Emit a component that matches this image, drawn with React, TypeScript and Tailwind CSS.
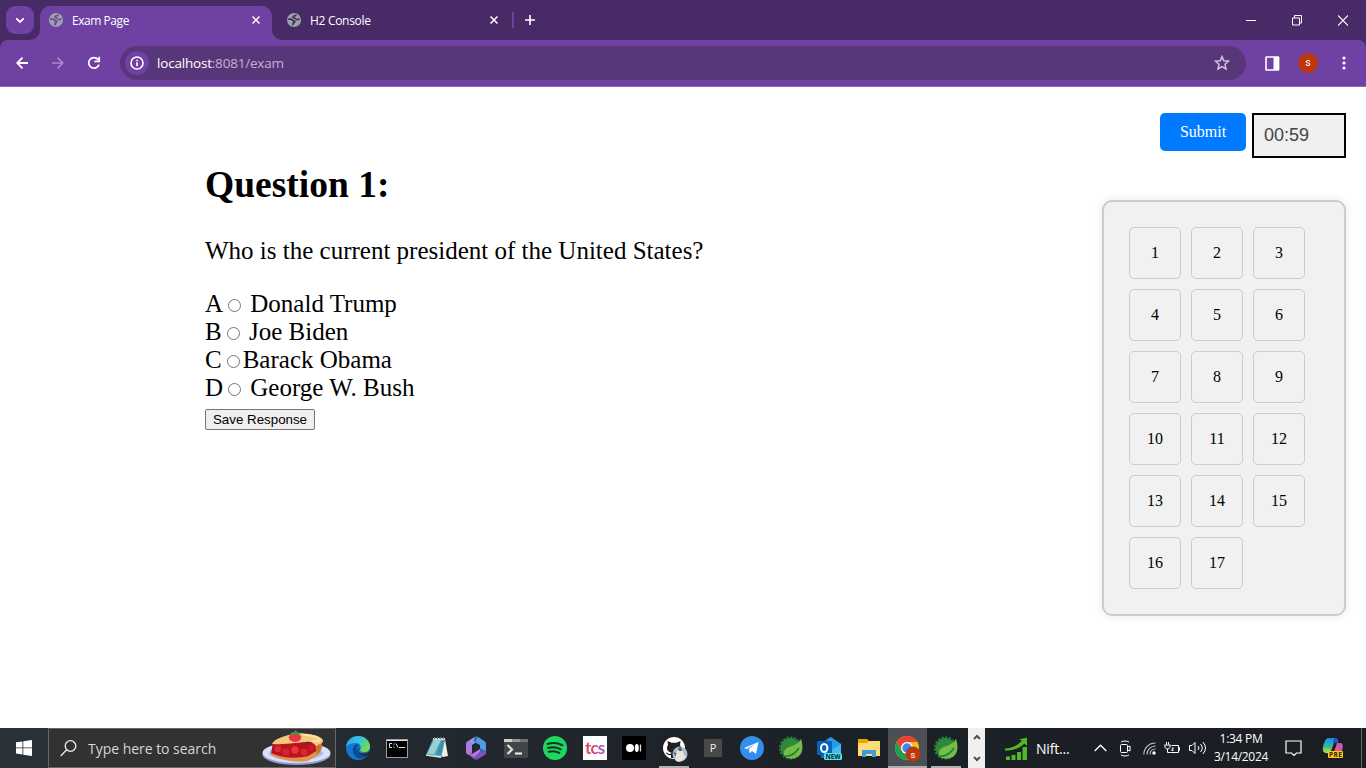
import React from "react";

const ui = "font-['Open_Sans','Noto_Sans',sans-serif]";

function Globe({ ink }: { ink: string }) {
  return (
    <svg width="14" height="14" viewBox="0 0 14 14" className="shrink-0">
      <circle cx="7" cy="7" r="7" fill="#9ba3a7" />
      <path
        d="M1.2 6.2H3.6C5.2 6.2 5.6 7.6 7 7.8 8.2 8 8 9.6 6.6 9.7 5.8 9.8 5.900 10.800 5.800 12.400"
        fill="none"
        stroke={ink}
        strokeWidth="1.7"
      />
      <path
        d="M9 1.6C9 2.800 8.200 3.100 7 3.100 5.400 3.200 5.600 4.900 7.200 4.900 9 4.900 8.600 6.700 10 6.700 11.200 6.700 11.200 5.800 12.600 5.800"
        fill="none"
        stroke={ink}
        strokeWidth="1.5"
      />
    </svg>
  );
}

function Cross() {
  return (
    <svg width="8" height="8" viewBox="0 0 8 8" className="shrink-0" stroke="#fff" strokeWidth="1.5">
      <path d="M.5.5l7 7M7.5.5l-7 7" />
    </svg>
  );
}

function TabStrip() {
  return (
    <div className={`flex h-10 shrink-0 bg-[#472a66] text-[12px] text-white ${ui}`}>
      <div className="mt-1.5 ml-1.5 flex h-7 w-7 items-center justify-center rounded-[9px] bg-[#6f41a2]">
        <svg width="10" height="7" viewBox="0 0 10 7" fill="none" stroke="#fff" strokeWidth="1.8">
          <path d="M1.2 1.3L5 5l3.8-3.7" />
        </svg>
      </div>
      <svg className="mt-[30px] ml-[-4px] shrink-0" width="10" height="10">
        <path d="M10 0v10H0A10 10 0 0 0 10 0" fill="#6f41a2" />
      </svg>
      <div className="mt-1.5 flex h-[34px] w-[232px] items-center rounded-t-[10px] bg-[#6f41a2] pr-3 pb-[6px] pl-[9px]">
        <Globe ink="#6f41a2" />
        <span className="ml-[9px] flex-1 pt-[2px] tracking-[-0.45px]">Exam Page</span>
        <Cross />
      </div>
      <svg className="mt-[30px] shrink-0" width="10" height="10">
        <path d="M0 0v10h10A10 10 0 0 1 0 0" fill="#6f41a2" />
      </svg>
      <div className="mt-1.5 flex h-7 w-[216px] items-center pl-[5px]">
        <Globe ink="#472a66" />
        <span className="ml-[9px] flex-1 pt-[2px] tracking-[-0.3px]">H2 Console</span>
        <Cross />
      </div>
      <div className="mt-3 ml-[14px] h-4 w-[2px] bg-[#6f41a2]" />
      <svg className="mt-[15px] ml-[11px]" width="10" height="10" stroke="#fff" strokeWidth="1.6">
        <path d="M5 0v10M0 5h10" />
      </svg>
      <div className="mr-[18px] ml-auto flex h-10 items-center gap-9">
        <svg width="10" height="11" stroke="#fff">
          <path d="M0 5.5h10" />
        </svg>
        <svg width="10" height="11" stroke="#fff" fill="none">
          <path d="M.5 3h7v7h-7zM2.5 3V.5h7V8H7.5" />
        </svg>
        <svg width="10" height="11" stroke="#fff" strokeWidth="1.1">
          <path d="M0 .5l10 10M10 .5l-10 10" />
        </svg>
      </div>
    </div>
  );
}

function Toolbar() {
  return (
    <div className="h-[47px] shrink-0 bg-[#472a66]">
      <div className={`flex h-[47px] items-center rounded-t-[8px] border-b border-[#8f69b8] bg-[#6f41a2] text-white ${ui}`}>
        <svg className="ml-4" width="12" height="12" fill="none" stroke="#fff" strokeWidth="1.8">
          <path d="M12 6H1.5M6.5.6L1.2 6l5.3 5.4" />
        </svg>
        <svg className="ml-6" width="12" height="12" fill="none" stroke="#a88bc8" strokeWidth="1.6">
          <path d="M0 6h10.5M5.5.6L10.8 6l-5.3 5.4" />
        </svg>
        <svg className="ml-[23px]" width="14" height="14" fill="none" stroke="#fff" strokeWidth="1.8">
          <path d="M12 8.6A5.3 5.3 0 1 1 11 3.4M12.2.8v4.6H7.4" />
        </svg>
        <div className="ml-[19px] flex h-[34px] w-[1126px] items-center rounded-full bg-[#57377a] pr-4 pl-[5px]">
          <div className="flex h-6 w-6 items-center justify-center rounded-full bg-[#6f41a2]">
            <svg width="14" height="14" fill="none" stroke="#fff" strokeWidth="1.6">
              <circle cx="7" cy="7" r="6" />
              <path d="M7 6.2v4M7 3.7v1.5" />
            </svg>
          </div>
          <div className="ml-2 flex-1 text-[13.5px] tracking-[-0.2px]">
            localhost<span className="text-[#c0b0d0]">:8081/exam</span>
          </div>
          <svg width="16" height="16" viewBox="0 0 16 16" fill="none" stroke="#d0c8d8" strokeWidth="1.5">
            <path d="M8 1.6l1.8 4.2 4.7.4-3.5 3.1 1 4.6L8 11.5l-4 2.4 1-4.6-3.5-3.1 4.7-.4z" />
          </svg>
        </div>
        <svg className="ml-[19px]" width="15" height="15">
          <rect x="1" y="1" width="12.600" height="13" rx=".5" fill="none" stroke="#fff" strokeWidth="1.6" />
          <path d="M8.5 1h5.300v13H8.5z" fill="#fff" />
        </svg>
        <div className="ml-[18px] flex h-5 w-5 items-center justify-center rounded-full bg-[#bf360c] font-['Roboto',sans-serif] text-[10.5px]">
          s
        </div>
        <svg className="ml-6" width="4" height="14" fill="#fff">
          <circle cx="2" cy="2" r="1.6" />
          <circle cx="2" cy="7" r="1.6" />
          <circle cx="2" cy="12" r="1.6" />
        </svg>
      </div>
    </div>
  );
}

const options: [string, string][] = [
  ["A", " Donald Trump"],
  ["B", " Joe Biden"],
  ["C", "Barack Obama"],
  ["D", " George W. Bush"],
];

function Exam() {
  return (
    <main className="flex min-h-0 flex-1 bg-white font-['Liberation_Serif',serif] text-black">
      <section className="mt-[76px] ml-[205px] flex-1 text-[25px] leading-7">
        <h2 className="text-[37.5px] leading-[43px] font-bold">Question 1:</h2>
        <p className="mt-[31px]">Who is the current president of the United States?</p>
        <div className="mt-[25px]">
          {options.map(([letter, label]) => (
            <label key={letter} className="block h-7 whitespace-pre">
              {letter}
              <input type="radio" name="answer" className="mt-[3px] mr-[3px] mb-0 ml-[5px] h-[13px] w-[13px] align-baseline" />
              {label}
            </label>
          ))}
        </div>
        <button className="mt-[7px] flex h-[21px] w-[110px] items-center justify-center rounded-[2px] border border-[#767676] bg-[#efefef] font-['Liberation_Sans',sans-serif] text-[13.333px] leading-none">
          Save Response
        </button>
      </section>
      <aside className="mt-[26px] mr-5 flex w-[244px] flex-col">
        <div className="flex justify-end gap-1.5">
          <button className="h-[38px] w-[86px] rounded-[5px] bg-[#007bff] text-[16px] text-white">Submit</button>
          <div className="flex h-[45px] w-[94px] items-center border-2 border-black bg-[#efefef] pl-[10px] font-['Liberation_Sans',sans-serif] text-[18px] text-[#444]">
            00:59
          </div>
        </div>
        <div className="mt-[42px] flex h-[416px] flex-wrap content-start gap-[10px] rounded-[10px] border-2 border-[#ccc] bg-[#f1f1f1] p-[25px] shadow-[0_0_10px_rgba(0,0,0,0.1)]">
          {Array.from({ length: 17 }, (_, i) => (
            <button key={i} className="h-[52px] w-[52px] rounded-[5px] border border-[#ccc] text-[16px]">
              {i + 1}
            </button>
          ))}
        </div>
      </aside>
    </main>
  );
}

function Pie() {
  return (
    <svg width="70" height="36" viewBox="0 0 70 36">
      <ellipse cx="34.5" cy="24.5" rx="34" ry="10.5" fill="#8f9ccf" />
      <ellipse cx="34.5" cy="22.8" rx="34" ry="10.3" fill="#dbe0fa" />
      <ellipse cx="34" cy="23" rx="27" ry="7.5" fill="#aeb8e6" />
      <path d="M11 12L54 13 54 25 46 30C33 31 20 29 9 24z" fill="#b9131f" />
      <path d="M9 23C20 28 33 29 46 26L56 20v5L46 31C33 33 19 30 9 25z" fill="#df9448" />
      <path d="M53 14L60 11V17C59 21 57 24 55 25z" fill="#c97430" />
      <path d="M10 14C12 9 22 6 34 3 45 3 58 5 61 10 62 13 57 14 54 16 52 13 48 11 44 12 37 12 25 15 10 14z" fill="#f5c77c" />
      <path d="M40 5c8 0 15 1 18 5-3 2-5 0-8 1" fill="none" stroke="#ffe0a2" strokeWidth="2.2" />
      <circle cx="16" cy="19" r="3.3" fill="#dc2b37" />
      <circle cx="24" cy="22" r="3.8" fill="#d42431" />
      <circle cx="33" cy="20" r="3.7" fill="#e5353f" />
      <circle cx="42" cy="22" r="3.5" fill="#d92633" />
      <circle cx="49" cy="18" r="3" fill="#c91c2a" />
      <path d="M27 6C28 3 36 2 39 6 40 9 37 12 34 12 30 12 26 10 27 6z" fill="#e93645" />
      <path d="M28 3l4-1 2-2 1 2 4 1-3 2-3-1-3 1z" fill="#39994a" />
    </svg>
  );
}

const Edge = () => (
  <svg width="24" height="24" viewBox="0 0 24 24">
    <defs>
      <linearGradient id="eg" x1="0" y1="0" x2="1" y2=".5">
        <stop stopColor="#26a9e8" />
        <stop offset=".55" stopColor="#35c1df" />
        <stop offset="1" stopColor="#70dd4c" />
      </linearGradient>
    </defs>
    <circle cx="12" cy="12" r="12" fill="#1478cf" />
    <path d="M0 11C1 4 6 0 12 0c7 0 12 5 12 10.5 0 3.5-2.5 5.5-5.5 5.5-4 0-5-1-4-3 1-1 .5-6-4.5-6C5.500 7 2 8 0 11" fill="url(#eg)" />
    <path d="M9 9c-3 2-3 7 0 11 4 4 9 3 13-1-4 2-9 1-11-3-1-3 0-5 2-7-2-1-3-1-4 0" fill="#0c4b92" />
    <path d="M14 11.500c-1 3-3 3.500 0 5.500 3 1 6.500.5 10-2l-1 4c-3 1.500-6 1.500-8.500 0-4-2.500-4-6-.5-7.500" fill="#262d36" />
  </svg>
);

const Cmd = () => (
  <svg width="22" height="19" viewBox="0 0 22 19">
    <path fill="#9c9da0" d="M0 0h22v19H0z" />
    <path fill="#e5e6e8" d="M1 1h20v1H1z" />
    <path fill="#020202" d="M1 2h20v16H1z" />
    <path d="M6 4.500H3.500V8.500H6M8 4.500v1.300M8 7.500v1.300M10 4.500l2 4M13 8.500h6" stroke="#ddd" fill="none" />
  </svg>
);

const Notepad = () => (
  <svg width="24" height="24" viewBox="0 0 24 24">
    <path d="M20 3l3 17-5 1-2-1z" fill="#f1eee3" />
    <path d="M8 3h12l-3.500 18L1 19z" fill="#54a9bc" />
    <path d="M9 4h7L9 18l-7 0z" fill="#9bd0d9" />
    <path d="M16 5h3l-3 14-5-.5z" fill="#3c91a8" />
    <path d="M8 2h12v2H8z" fill="#c4d2d6" />
    <path d="M9.500 1v2m3-2v2m3-2v2m3-2v2" stroke="#5e777f" />
    <path d="M1 18.500l15.500 1.800L16 22 1 19.800z" fill="#e1e2d9" />
  </svg>
);

const M365 = () => (
  <svg width="22" height="24" viewBox="0 0 22 24">
    <defs>
      <linearGradient id="m1" x1="1" x2="0" y2="1">
        <stop stopColor="#d2c6ff" />
        <stop offset=".5" stopColor="#9285ed" />
        <stop offset="1" stopColor="#d06bc9" />
      </linearGradient>
    </defs>
    <path d="M10 1L3 5C1 6 1 7 1 9v7c0 3 4 3 6 1V9l6-4V1c-1-.5-2-.5-3 0" fill="url(#m1)" />
    <path d="M10 1h3l6 4c1.500 1 2 2 2 4v6c0 2-1 3-2 4l-4-3V9L9 6c-1-2 0-4 1-5" fill="#3867b8" />
    <path d="M13 1l6 4c1.500 1 2 2 2 4v6l-6-3V9l-5-3z" fill="#4f9ce1" />
    <path d="M2 18l7 5c1.500 1 3 1 4 0l7-4c1-1 1-2 1-4l-6 1-5 3c-3 2-6 1-8-1" fill="#7652c2" />
    <path d="M2 18l5 0 8-5v3l-6 5z" fill="#bb78dc" />
  </svg>
);

const Terminal = () => (
  <svg width="24" height="19" viewBox="0 0 24 19">
    <rect width="24" height="19" rx="1" fill="#444548" />
    <path d="M0 0h8v3H0z" fill="#d0d0d0" />
    <path d="M8 0h8v3H8z" fill="#969696" />
    <path d="M16 0h8v3h-8z" fill="#737373" />
    <path d="M3.500 6l4.500 4.500L3.500 15" fill="none" stroke="#e1e1e1" strokeWidth="2.200" />
    <path d="M11 14.500h7" stroke="#f2f2f2" strokeWidth="2" />
  </svg>
);

const Spotify = () => (
  <svg width="24" height="24" viewBox="0 0 24 24">
    <circle cx="12" cy="12" r="12" fill="#1ed760" />
    <path d="M4.500 8c5-1.500 11-1 15 1.300M5 12c4.500-1.400 9-.8 12.700 1.300M5.800 15.800c4-1.100 7.500-.6 10.500 1.100" fill="none" stroke="#12351f" strokeWidth="2" strokeLinecap="round" />
  </svg>
);

const Tcs = () => (
  <div className="flex h-6 w-6 items-center justify-center bg-white">
    <span className="bg-gradient-to-r from-[#ef4136] via-[#d2408b] to-[#8260c8] bg-clip-text font-['Lato',sans-serif] text-[17px] leading-6 font-bold tracking-[-0.8px] text-transparent">
      tcs
    </span>
  </div>
);

const Medium = () => (
  <svg width="24" height="24">
    <path d="M0 0h24v24H0z" />
    <circle cx="8" cy="12" r="4" fill="#fff" />
    <ellipse cx="14.8" cy="12" rx="2" ry="4" fill="#fff" />
    <path d="M18.500 8.500v7" stroke="#ddd" strokeWidth="1.300" />
  </svg>
);

const Github = () => (
  <svg width="26" height="26" viewBox="0 0 26 26" className="mt-[2px] ml-[2px]">
    <path d="M0 0h24v24H0z" fill="#231e21" />
    <circle cx="12" cy="12" r="11" fill="#fff" />
    <path d="M9 22v-3c-3 1-4-1-5.500-2.500 2-.5 2.500 2 5 1.500l1-1.500C5 16 4 12 6 9L5.500 5l4 1.800h5L18.500 5 18 9c2 3 1 7-3.500 7.500L15 18v4z" fill="#231e21" />
    <circle cx="18" cy="18" r="7.500" fill="#a9bed0" />
    <path d="M13 24l2-9 3-2 3 2 1 4 2 2-4 4-4 1z" fill="#e7e4e4" />
    <path d="M16 12l3-1 1 4-3 0zM11.500 15.500l3 2-1.500 2.500z" fill="#655b5b" />
  </svg>
);

const PBox = () => (
  <div className="flex h-[18px] w-[18px] items-center justify-center rounded-[1px] bg-[#494949] text-[11px] text-[#eee]">P</div>
);

const Telegram = () => (
  <svg width="24" height="24">
    <circle cx="12" cy="12" r="12" fill="#348eed" />
    <path d="M4 12L18.500 6l-2.500 12-4-3-2.200 2.200-1-4.200 6-5-8 5z" fill="#fff" />
  </svg>
);

const Spring = () => (
  <svg width="24" height="24" viewBox="0 0 24 24">
    <circle cx="11.500" cy="12" r="9.800" fill="none" stroke="#237b38" strokeWidth="3.600" strokeDasharray="2.200 1.300" />
    <circle cx="11.500" cy="12" r="10" fill="#30883a" />
    <path d="M22 3c3 9 2 18-8 19.500-5 .8-10-1-9-6C6 9 17 12 22 3" fill="#75bc48" />
    <path d="M5 20c6 1 11-2 15-8" fill="none" stroke="#247b38" strokeWidth="1.500" />
  </svg>
);

const Outlook = () => (
  <svg width="25" height="23" viewBox="0 0 25 23">
    <path d="M3 7L13 0l11 7v14H4z" fill="#1767ba" />
    <path d="M10 3l4-3 10 7-9 8z" fill="#299be0" />
    <path d="M10 16l14-9v14H8z" fill="#42bcef" />
    <rect y="4" width="15" height="14" rx="1" fill="#0864b8" />
    <ellipse cx="7.200" cy="11" rx="3.200" ry="4" fill="none" stroke="#fff" strokeWidth="2" />
    <rect x="7" y="16" width="18" height="7" rx="1.500" fill="#55e4ed" />
    <text x="8.500" y="22" fontFamily="Open Sans" fontSize="6.500" fontWeight="bold" textLength="15" fill="#09282d">
      NEW
    </text>
  </svg>
);

const Folder = () => (
  <svg width="22" height="18" viewBox="0 0 22 18">
    <path d="M0 0h9l2 2h11v15H0z" fill="#e9a900" />
    <path d="M0 4l9 0 2-2h11v15H0z" fill="#ffdc76" />
    <path d="M4 18v-7h14v7h-4v-3H8v3z" fill="#3d9de1" />
  </svg>
);

const Chrome = () => (
  <svg width="26" height="27" viewBox="0 0 26 27" className="mt-[2px] ml-[2px]">
    <circle cx="12" cy="12" r="12" fill="#fbc116" />
    <path d="M1.600 6A12 12 0 0 1 22.400 6H12l-5 9z" fill="#ea4335" />
    <path d="M1.600 6A12 12 0 0 0 12 24l5-9H7z" fill="#259e4b" />
    <circle cx="12" cy="12" r="6" fill="#fff" />
    <circle cx="12" cy="12" r="4.700" fill="#4285f4" />
    <circle cx="18" cy="18" r="7.500" fill="#bf360c" />
    <text x="18" y="21.500" textAnchor="middle" fill="#fff" fontSize="9.500" fontFamily="Roboto">
      s
    </text>
  </svg>
);

const apps = [Edge, Cmd, Notepad, M365, Terminal, Spotify, Tcs, Medium, Github, PBox, Telegram, Spring, Outlook, Folder, Chrome, Spring];

function Taskbar() {
  return (
    <footer className={`flex h-10 shrink-0 items-center bg-gradient-to-r from-[#2b3138] via-[#1c2128] via-60% to-[#1a1d22] text-white ${ui}`}>
      <svg className="ml-4 shrink-0" width="16" height="16" fill="#fff">
        <path d="M0 2.300L6.500 1.400v6.100H0zM7.300 1.300L16 0v7.500H7.300zM0 8.300h6.500v6.200L0 13.600zM7.300 8.300H16V16l-8.700-1.300z" />
      </svg>
      <div className="ml-4 flex h-10 w-[288px] shrink-0 items-center border border-[#686868] bg-[#323232] pl-[11px]">
        <svg width="17" height="17" fill="none" stroke="#eee" strokeWidth="1.300">
          <circle cx="10.500" cy="6" r="5.300" />
          <path d="M6.700 9.800L.7 16" />
        </svg>
        <span className="ml-[11px] flex-1 text-[14px] tracking-[-0.03px] whitespace-nowrap text-[#d5d5d5]">Type here to search</span>
        <div className="mr-[3px]">
          <Pie />
        </div>
      </div>
      <div className="ml-[2px] grid w-[628px] shrink-0 grid-cols-[repeat(9,39.5px)_repeat(7,38.9px)]">
        {apps.map((Icon, i) => (
          <div key={i} className={`relative flex h-10 items-center justify-center ${i === 14 ? "bg-[#4c5055]" : ""}`}>
            <Icon />
            {(i === 8 || i === 14 || i === 15) && (
              <div className={`absolute bottom-0 h-[2px] bg-[#aeb0b0] ${i === 14 ? "inset-x-0" : "inset-x-[4.5px]"}`} />
            )}
          </div>
        ))}
      </div>
      <div className="ml-[2px] flex h-10 w-[17px] shrink-0 flex-col items-center justify-between bg-[#f0f0f0] py-[6px]">
        <svg width="8" height="6" fill="none" stroke="#505050" strokeWidth="2">
          <path d="M1 5l3-3 3 3" />
        </svg>
        <svg width="8" height="6" fill="none" stroke="#505050" strokeWidth="2">
          <path d="M1 1l3 3 3-3" />
        </svg>
      </div>
      <svg className="ml-5 shrink-0" width="23" height="23" viewBox="0 0 23 23" fill="#4fb928">
        <path d="M1 19.500h4V23H1zM6.500 18h4v5h-4zM12 15h4v8h-4zM17.500 10H22v13h-4.500z" />
        <path d="M0 11.500c7 0 13-3 17-8L14 2.500 22 .5v8.500l-2.500-2.500C14 11.500 8 14 0 13.500" />
      </svg>
      <span className="ml-2 w-[34px] text-[14px] tracking-[-0.2px]">Nift...</span>
      <svg className="ml-[24px] shrink-0" width="13" height="8" fill="none" stroke="#fff" strokeWidth="1.300">
        <path d="M.7 7L6.500 1.200 12.300 7" />
      </svg>
      <svg className="ml-[12px] shrink-0" width="12" height="17" fill="none" stroke="#fff">
        <rect x="1.500" y="4.500" width="7" height="8" rx="1" />
        <path d="M8.500 7l2.500-1v5l-2.500-1M2 2c2-1.300 6-1.300 8 0M2 15c2 1.300 6 1.300 8 0" />
      </svg>
      <svg className="ml-[12px] shrink-0" width="13" height="13" fill="none" strokeWidth="1.100">
        <path d="M.8 12.500C.8 6 6 1 12.500 1M4 12.500c0-5 4-8.500 8.500-8.500M7 12.500c0-3.500 2.500-5.500 5.500-5.500" stroke="#c4c4c4" />
        <circle cx="11" cy="11" r="1.700" fill="#fff" />
      </svg>
      <svg className="ml-[8px] shrink-0" width="18" height="13" fill="none" stroke="#fff">
        <path d="M7.500 3.500h7v7h-8M14.500 5.500h1v3h-1M2.500 0v2.500M4.500 0v2.500M.5 3h6M1 3v2c0 2.500 5 2.500 5 0V3M3.500 7v3.500h3" />
        <path d="M8.500 5h1v4H7z" fill="#ccc" stroke="none" />
      </svg>
      <svg className="ml-[7px] shrink-0" width="18" height="14" fill="none" stroke="#fff">
        <path d="M.5 4.500h2.500l3-3v11l-3-3H.5zM9 5q2 2 0 4M11.500 3q3.500 4 0 8M14 1q5 6 0 12" />
      </svg>
      <div className="ml-[6px] w-[56px] text-center text-[12px] leading-[18px] tracking-[-0.3px] whitespace-nowrap">
        <div>1:34 PM</div>
        <div>3/14/2024</div>
      </div>
      <svg className="ml-[16px] shrink-0" width="17" height="17" fill="none" stroke="#fff" strokeWidth="1.200">
        <path d="M1 1h15v12h-4.500L9 15.500 6.500 13H1z" />
      </svg>
      <svg className="ml-[20px] shrink-0" width="22" height="22" viewBox="0 0 22 22">
        <defs>
          <linearGradient id="cp" x2="0" y2="1">
            <stop stopColor="#2386ee" />
            <stop offset=".55" stopColor="#2dbb99" />
            <stop offset="1" stopColor="#e6d639" />
          </linearGradient>
          <linearGradient id="cq" x1="1" x2="0" y2="1">
            <stop stopColor="#a85ce2" />
            <stop offset=".5" stopColor="#e65395" />
            <stop offset="1" stopColor="#ff9659" />
          </linearGradient>
        </defs>
        <path d="M6 1h7c2 0 3 1 3 4l-4 1-3 8c-1 3-6 3-8 0C0 11 3 1 6 1" fill="url(#cp)" />
        <path d="M15 6h3c4 0 3 4 1 12h-8z" fill="url(#cq)" />
        <path d="M12 1c3 0 3 2 4 5h-5z" fill="#2152bf" />
        <rect x="6" y="14" width="15" height="7" rx="1" fill="#ffca0a" />
        <text x="7" y="20" fontFamily="Open Sans" fontSize="6.500" fontWeight="bold" textLength="13" fill="#222">
          PRE
        </text>
      </svg>
      <div className="mr-1 ml-auto h-10 w-px bg-[#666]" />
    </footer>
  );
}

export default function App() {
  return (
    <div className="flex h-[768px] w-[1366px] flex-col overflow-hidden">
      <TabStrip />
      <Toolbar />
      <Exam />
      <Taskbar />
    </div>
  );
}
